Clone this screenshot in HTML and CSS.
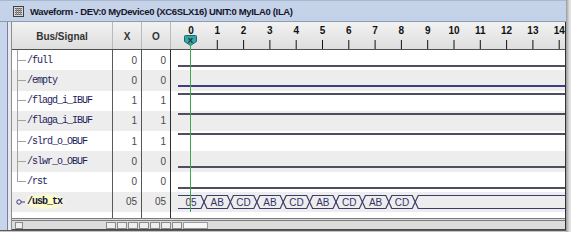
FILE: index.html
```html
<!DOCTYPE html>
<html>
<head>
<meta charset="utf-8">
<link rel="stylesheet" href="styles.css">
</head>
<body>
<div class="window">
  <div class="win-main">
    <div class="titlebar">
      <svg class="app-icon" width="11" height="11" viewBox="0 0 11 11">
        <rect x="0.5" y="0.5" width="10" height="10" fill="#d8d8d8" stroke="#404040"/>
        <path d="M2 2.5h7M2 4.5h7M2 6.5h7M2 8.5h7" stroke="#606060" stroke-width="1"/>
        <path d="M3.5 2v7M5.5 2v7M7.5 2v7" stroke="#8a8a8a" stroke-width="1"/>
      </svg>
      <span class="title">Waveform - DEV:0 MyDevice0 (XC6SLX16) UNIT:0 MyILA0 (ILA)</span>
    </div>
    <div class="body">
      <div class="leftframe"></div>
      <div class="panel">
        <div class="table">
          <div class="row header">
            <div class="cell hname">Bus/Signal</div>
            <div class="cell hval">X</div>
            <div class="cell hval">O</div>
            <div class="cell ruler">
              <svg width="394" height="27" viewBox="0 0 394 27">
                <g class="ticks">
                  <line x1="46.3" y1="18" x2="46.3" y2="27"/>
                  <line x1="72.6" y1="18" x2="72.6" y2="27"/>
                  <line x1="98.9" y1="18" x2="98.9" y2="27"/>
                  <line x1="125.2" y1="18" x2="125.2" y2="27"/>
                  <line x1="151.5" y1="18" x2="151.5" y2="27"/>
                  <line x1="177.8" y1="18" x2="177.8" y2="27"/>
                  <line x1="204.1" y1="18" x2="204.1" y2="27"/>
                  <line x1="230.4" y1="18" x2="230.4" y2="27"/>
                  <line x1="256.7" y1="18" x2="256.7" y2="27"/>
                  <line x1="283" y1="18" x2="283" y2="27"/>
                  <line x1="309.3" y1="18" x2="309.3" y2="27"/>
                  <line x1="335.6" y1="18" x2="335.6" y2="27"/>
                  <line x1="361.9" y1="18" x2="361.9" y2="27"/>
                  <line x1="388.2" y1="18" x2="388.2" y2="27"/>
                </g>
                <g class="nums">
                  <text x="20" y="12">0</text>
                  <text x="46.3" y="12">1</text>
                  <text x="72.6" y="12">2</text>
                  <text x="98.9" y="12">3</text>
                  <text x="125.2" y="12">4</text>
                  <text x="151.5" y="12">5</text>
                  <text x="177.8" y="12">6</text>
                  <text x="204.1" y="12">7</text>
                  <text x="230.4" y="12">8</text>
                  <text x="256.7" y="12">9</text>
                  <text x="283" y="12">10</text>
                  <text x="309.3" y="12">11</text>
                  <text x="335.6" y="12">12</text>
                  <text x="361.9" y="12">13</text>
                  <text x="388.2" y="12">14</text>
                </g>
                <path class="marker" d="M13.5 14.5 Q13.5 13.5 14.5 13.5 H24.5 Q25.5 13.5 25.5 14.5 V19.5 L19.5 23.5 L13.5 19.5 Z"/>
                <text class="marker-x" x="19.5" y="21">X</text>
              </svg>
            </div>
          </div>

          <div class="row">
            <div class="cell name"><span class="branch"></span><span class="sig">/full</span></div>
            <div class="cell val">0</div>
            <div class="cell val">0</div>
            <div class="cell wave"><svg width="394" height="20"><line class="lvl" x1="7" y1="16" x2="394" y2="16"/></svg></div>
          </div>
          <div class="row">
            <div class="cell name"><span class="branch"></span><span class="sig">/empty</span></div>
            <div class="cell val">0</div>
            <div class="cell val">0</div>
            <div class="cell wave"><svg width="394" height="20"><line class="lvl navy" x1="7" y1="16" x2="394" y2="16"/></svg></div>
          </div>
          <div class="row">
            <div class="cell name"><span class="branch"></span><span class="sig">/flagd_i_IBUF</span></div>
            <div class="cell val">1</div>
            <div class="cell val">1</div>
            <div class="cell wave"><svg width="394" height="20"><line class="lvl" x1="7" y1="3" x2="394" y2="3"/></svg></div>
          </div>
          <div class="row">
            <div class="cell name"><span class="branch"></span><span class="sig">/flaga_i_IBUF</span></div>
            <div class="cell val">1</div>
            <div class="cell val">1</div>
            <div class="cell wave"><svg width="394" height="20"><line class="lvl" x1="7" y1="3" x2="394" y2="3"/></svg></div>
          </div>
          <div class="row">
            <div class="cell name"><span class="branch"></span><span class="sig">/slrd_o_OBUF</span></div>
            <div class="cell val">1</div>
            <div class="cell val">1</div>
            <div class="cell wave"><svg width="394" height="20"><line class="lvl" x1="7" y1="3" x2="394" y2="3"/></svg></div>
          </div>
          <div class="row">
            <div class="cell name"><span class="branch"></span><span class="sig">/slwr_o_OBUF</span></div>
            <div class="cell val">0</div>
            <div class="cell val">0</div>
            <div class="cell wave"><svg width="394" height="20"><line class="lvl" x1="7" y1="16" x2="394" y2="16"/></svg></div>
          </div>
          <div class="row">
            <div class="cell name"><span class="branch last"></span><span class="sig">/rst</span></div>
            <div class="cell val">0</div>
            <div class="cell val">0</div>
            <div class="cell wave"><svg width="394" height="20"><line class="lvl" x1="7" y1="16" x2="394" y2="16"/></svg></div>
          </div>
          <div class="row">
            <div class="cell name">
              <svg class="busicon" width="10" height="8" viewBox="0 0 10 8"><circle cx="3" cy="4" r="2.2"/><line x1="5.2" y1="4" x2="9" y2="4"/></svg>
              <span class="sig bus">/usb_tx</span>
            </div>
            <div class="cell val">05</div>
            <div class="cell val">05</div>
            <div class="cell wave">
              <svg width="394" height="20" class="busw">
                <path d="M7 3.5 H30 L33 10 L30 16.5 H7"/>
                <path d="M33 10 L36 3.5 H56.4 L59.4 10 L56.4 16.5 H36 Z"/>
                <path d="M59.4 10 L62.4 3.5 H82.8 L85.8 10 L82.8 16.5 H62.4 Z"/>
                <path d="M85.8 10 L88.8 3.5 H109.2 L112.2 10 L109.2 16.5 H88.8 Z"/>
                <path d="M112.2 10 L115.2 3.5 H135.6 L138.6 10 L135.6 16.5 H115.2 Z"/>
                <path d="M138.6 10 L141.6 3.5 H162 L165 10 L162 16.5 H141.6 Z"/>
                <path d="M165 10 L168 3.5 H188.4 L191.4 10 L188.4 16.5 H168 Z"/>
                <path d="M191.4 10 L194.4 3.5 H214.8 L217.8 10 L214.8 16.5 H194.4 Z"/>
                <path d="M217.8 10 L220.8 3.5 H241.2 L244.2 10 L241.2 16.5 H220.8 Z"/>
                <path d="M394 3.5 H247.2 L244.2 10 L247.2 16.5 H394"/>
                <g class="blabels">
                  <text x="20" y="14">05</text>
                  <text x="46.2" y="14">AB</text>
                  <text x="72.6" y="14">CD</text>
                  <text x="99" y="14">AB</text>
                  <text x="125.4" y="14">CD</text>
                  <text x="151.8" y="14">AB</text>
                  <text x="178.2" y="14">CD</text>
                  <text x="204.6" y="14">AB</text>
                  <text x="231" y="14">CD</text>
                </g>
              </svg>
            </div>
          </div>
          <div class="row filler">
            <div class="cell name"></div>
            <div class="cell val"></div>
            <div class="cell val"></div>
            <div class="cell wave"></div>
          </div>
          <div class="cursor"></div>
        </div>
        <div class="hscroll">
          <div class="hs-left">
            <span class="sbtn small"></span>
            <span class="hs-gap"></span>
            <span class="sbtn"></span><span class="sbtn"></span><span class="sbtn"></span><span class="sbtn"></span><span class="sbtn"></span><span class="sbtn"></span>
          </div>
          <div class="hs-right">
            <span class="sbtn"></span>
            <span class="thumb"></span>
          </div>
        </div>
      </div>
    </div>
    <div class="bottomedge"></div>
  </div>
  <div class="shadow"></div>
</div>
</body>
</html>
```

FILE: styles.css
```css
html, body {
  margin: 0;
  padding: 0;
}
body {
  width: 571px;
  height: 232px;
  overflow: hidden;
  background: #d0d0d0;
  font-family: "Liberation Sans", Arial, sans-serif;
}
.window {
  display: flex;
  width: 571px;
  height: 232px;
}
.win-main {
  width: 566px;
  display: flex;
  flex-direction: column;
}
.shadow {
  width: 5px;
  background: linear-gradient(to right, #9a9a9a, #d8d8d8 60%, #ececec);
}
.titlebar {
  box-sizing: border-box;
  height: 22px;
  display: flex;
  align-items: center;
  gap: 6px;
  padding-left: 13px;
  border-top: 1px solid #a9b7cf;
  border-bottom: 1px solid #8d9bb3;
  background-color: #d7e2f3;
  background-image:
    radial-gradient(circle, #c3d1e8 0.7px, transparent 0.8px),
    linear-gradient(#e4ecf8, #d0dcf0);
  background-size: 2px 2px, 100% 100%;
}
.app-icon {
  flex: none;
}
.title {
  font-weight: bold;
  font-size: 9.5px;
  letter-spacing: -0.35px;
  color: #16162a;
  white-space: nowrap;
}
.body {
  display: flex;
  height: 208px;
}
.leftframe {
  width: 11px;
  background: linear-gradient(to right, #c8d5eb 0 7px, #7282a2 7px 8px, #e6e9f0 8px 11px);
}
.panel {
  width: 555px;
  box-sizing: border-box;
  border-left: 1px solid #8c8c8c;
  border-right: 1px solid #333;
  display: flex;
  flex-direction: column;
  background: #fff;
}
.table {
  position: relative;
  display: flex;
  flex-direction: column;
  height: 196px;
}
.row {
  display: grid;
  grid-template-columns: 101px 29px 29px 394px;
  height: 20.25px;
}
.row:nth-child(odd) {
  background: #ededed;
}
.row.header {
  height: 28px;
  box-sizing: border-box;
  border-bottom: 1px solid #505050;
  background: linear-gradient(#f2f2f2, #dedede);
}
.row.filler {
  height: auto;
  flex: 1;
  background: #fff;
}
.cell {
  box-sizing: border-box;
  display: flex;
  align-items: center;
  overflow: hidden;
}
.header .cell {
  justify-content: center;
  font-weight: bold;
  font-size: 10px;
  color: #333;
  border-right: 1px solid #b9b9b9;
  padding-top: 2px;
}
.header .ruler {
  border-right: none;
  padding-top: 0;
  align-items: flex-start;
}
.ruler svg {
  display: block;
}
.ticks line {
  stroke: #111;
  stroke-width: 1;
}
.nums text {
  font-family: "Liberation Sans", Arial, sans-serif;
  font-weight: bold;
  font-size: 10px;
  fill: #111;
  text-anchor: middle;
}
.marker {
  fill: #38a4a4;
  stroke: #176b6b;
  stroke-width: 1;
}
.marker-x {
  font-family: "Liberation Sans", Arial, sans-serif;
  font-weight: bold;
  font-size: 8px;
  fill: #0b3636;
  text-anchor: middle;
}
.name {
  border-right: 1px solid #5a5a5a;
}
.branch {
  align-self: stretch;
  width: 9px;
  margin-left: 5px;
  flex: none;
  background:
    linear-gradient(#a2a2a2, #a2a2a2) left top / 1px 100% no-repeat,
    linear-gradient(#a2a2a2, #a2a2a2) left 50% / 100% 1px no-repeat;
}
.branch.last {
  background:
    linear-gradient(#a2a2a2, #a2a2a2) left top / 1px 50% no-repeat,
    linear-gradient(#a2a2a2, #a2a2a2) left 50% / 100% 1px no-repeat;
}
.sig {
  margin-left: 1px;
  font-family: "Liberation Mono", "DejaVu Sans Mono", monospace;
  font-size: 10px;
  letter-spacing: -1px;
  color: #1e1e5a;
  white-space: nowrap;
}
.busicon {
  flex: none;
  margin-left: 4px;
}
.busicon circle {
  fill: none;
  stroke: #3a3a7a;
  stroke-width: 1;
}
.busicon line {
  stroke: #3a3a7a;
  stroke-width: 1;
}
.sig.bus {
  margin-left: 1px;
  font-weight: bold;
  color: #14143c;
  padding: 3px 4px 3px 0;
  background: radial-gradient(ellipse at 45% 50%, #ffffb8 0%, #fffccc 45%, rgba(255, 255, 230, 0) 75%);
}
.val {
  justify-content: flex-end;
  padding-right: 4px;
  border-right: 1px solid #555;
  font-size: 10px;
  color: #4a4a4a;
}
.row > .val:nth-child(3) {
  border-right-color: #2f2f2f;
}
.wave svg {
  display: block;
}
.lvl {
  stroke: #4e4e5e;
  stroke-width: 2;
}
.lvl.navy {
  stroke: #3e3e86;
}
.busw path {
  fill: none;
  stroke: #3c3c6a;
  stroke-width: 1.2;
}
.blabels text {
  font-family: "Liberation Sans", Arial, sans-serif;
  font-size: 10px;
  fill: #34346a;
  text-anchor: middle;
}
.cursor {
  position: absolute;
  left: 178px;
  top: 23px;
  width: 1px;
  height: 167px;
  background: #3caa4c;
}
.hscroll {
  box-sizing: border-box;
  height: 12px;
  display: flex;
  border-top: 3px double #7a7a7a;
  border-bottom: 1px solid #4a4a4a;
  background: #dcdcdc;
}
.hs-left {
  width: 159px;
  display: flex;
  align-items: center;
  padding-left: 3px;
  box-sizing: border-box;
  gap: 1px;
}
.hs-gap {
  flex: 1;
}
.sbtn {
  width: 10px;
  height: 7px;
  box-sizing: border-box;
  border: 1px solid #8a8a8a;
  background: #eeeeee;
}
.sbtn.small {
  width: 8px;
}
.hs-right {
  flex: 1;
  display: flex;
  align-items: center;
  gap: 1px;
  padding-left: 1px;
}
.thumb {
  width: 25px;
  height: 7px;
  box-sizing: border-box;
  border: 1px solid #9a9a9a;
  background: #f6f6f6;
}
.bottomedge {
  height: 2px;
  background: linear-gradient(#5a5a5a 0 1px, #c4c4c4 1px 2px);
}
```
